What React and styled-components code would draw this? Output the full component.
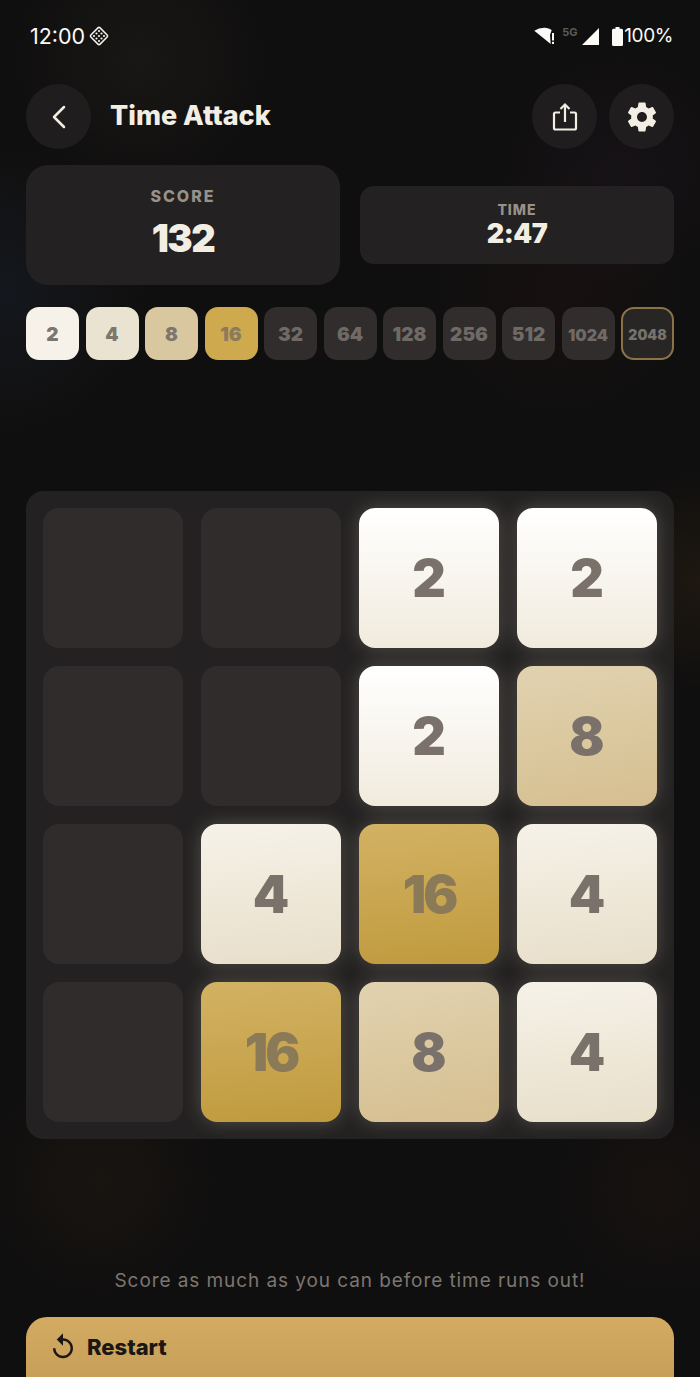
import React from 'react';
import styled, { createGlobalStyle, css } from 'styled-components';
import { ChevronLeft } from 'lucide-react';

const GlobalStyle = createGlobalStyle`
    html, body {
        margin: 0;
        padding: 0;
        background: #100f0f;
    }
    * {
        box-sizing: border-box;
    }
`;

const Page = styled.div`
    width: 700px;
    height: 1377px;
    overflow: hidden;
    padding: 0 26px;
    font-family: "Inter", "Noto Sans", sans-serif;
    color: #f3eee3;
    background:
        radial-gradient(circle at 0px 290px, rgba(32, 46, 66, 0.28), transparent 150px),
        radial-gradient(circle at 140px 60px, rgba(50, 48, 42, 0.25), transparent 130px),
        radial-gradient(circle at 620px 170px, rgba(40, 28, 44, 0.25), transparent 120px),
        radial-gradient(circle at 560px 290px, rgba(50, 20, 20, 0.2), transparent 130px),
        radial-gradient(circle at 700px 580px, rgba(70, 50, 20, 0.25), transparent 110px),
        radial-gradient(circle at 100px 1180px, rgba(50, 36, 20, 0.25), transparent 120px),
        radial-gradient(circle at 660px 1190px, rgba(50, 30, 20, 0.2), transparent 110px),
        #100f0f;
`;

const StatusBar = styled.div`
    height: 72px;
    padding: 24px 1px 0 4px;
    display: flex;
    align-items: flex-start;
    justify-content: space-between;
    line-height: 24px;
    color: #fbfaf7;
`;

const StatusGroup = styled.div`
    display: flex;
    align-items: center;
    gap: ${props => props.$gap || 0}px;
`;

const BatteryGroup = styled.div`
    display: flex;
    align-items: center;
    margin-left: 13px;
`;

const ClockText = styled.span`
    font-size: 21.5px;
    font-weight: 400;
`;

const BatteryText = styled.span`
    font-size: 19px;
    letter-spacing: -0.4px;
    margin-left: 1px;
`;

const FiveG = styled.span`
    width: 16px;
    font-size: 11px;
    font-weight: 700;
    line-height: 12px;
    color: #5d5b58;
    align-self: flex-start;
    margin: 2px 4px 0 7px;
`;

const Header = styled.header`
    height: 65px;
    margin-top: 12px;
    display: flex;
    align-items: center;
    justify-content: space-between;
`;

const HeaderGroup = styled.div`
    display: flex;
    align-items: center;
    gap: ${props => props.$gap}px;
`;

const RoundButton = styled.button`
    width: 65px;
    height: 65px;
    padding: 0;
    border: 0;
    border-radius: 50%;
    display: flex;
    align-items: center;
    justify-content: center;
    background: #1f1d1d;
    color: #f3eee3;
`;

const Title = styled.h1`
    margin: 0 0 2px;
    font-size: 27px;
    line-height: 32px;
    font-weight: 800;
    color: #f3eee3;
`;

const Stats = styled.div`
    margin-top: 16px;
    height: 120px;
    display: grid;
    grid-template-columns: 314px 314px;
    justify-content: space-between;
    align-items: center;
`;

const StatCard = styled.div`
    display: flex;
    flex-direction: column;
    align-items: center;
    background: #232121;
    ${props => props.$large ? css`
        height: 120px;
        border-radius: 22px;
        padding-top: 21px;
    ` : css`
        height: 78px;
        border-radius: 14px;
        padding-top: 15px;
    `}
`;

const StatLabel = styled.span`
    font-weight: 800;
    color: #98918a;
    ${props => props.$large ? css`
        font-size: 16px;
        line-height: 20px;
        letter-spacing: 2px;
    ` : css`
        font-size: 14px;
        line-height: 18px;
        letter-spacing: 1px;
    `}
`;

const StatValue = styled.span`
    font-weight: 900;
    color: #f3eee3;
    ${props => props.$large ? css`
        font-size: 38px;
        line-height: 44px;
        letter-spacing: -1.5px;
        margin-top: 10px;
    ` : css`
        font-size: 27px;
        line-height: 32px;
        letter-spacing: -0.5px;
        margin-top: -1px;
    `}
`;

const Chips = styled.div`
    margin-top: 22px;
    display: flex;
    justify-content: space-between;
`;

const chipLook = {
    2: css`background: #f6f2ea; color: #7d766e;`,
    4: css`background: #ebe3d2; color: #7d766e;`,
    8: css`background: #d9c7a0; color: #7d766e;`,
    16: css`background: #cfa94e; color: #8a7b5c;`,
};

const Chip = styled.div`
    width: 53px;
    height: 53px;
    padding-top: 2px;
    border-radius: 13px;
    display: flex;
    align-items: center;
    justify-content: center;
    font-weight: 900;
    font-size: ${props => props.$small ? 14 : props.$mid ? 16 : 19}px;
    background: #302d2c;
    color: #6f6a66;
    ${props => chipLook[props.$value]}
    ${props => props.$goal && css`
        background: #282625;
        color: #77726c;
        border: 2px solid #8a7447;
    `}
`;

const Board = styled.div`
    margin-top: 131px;
    width: 648px;
    height: 648px;
    padding: 17px;
    border-radius: 18px;
    background: #232121;
    display: grid;
    grid-template-columns: repeat(4, 140px);
    grid-template-rows: repeat(4, 140px);
    gap: 18px;
`;

const EmptyCell = styled.div`
    border-radius: 16px;
    background: #302c2b;
`;

const tileLook = {
    2: css`background: linear-gradient(180deg, #ffffff, #f1ebdd);`,
    4: css`background: linear-gradient(175deg, #f6f2e9, #e8dfca);`,
    8: css`background: linear-gradient(170deg, #e1d2b0, #d6bf90);`,
    16: css`background: linear-gradient(175deg, #d2b263, #c09a3e);`,
};

const Tile = styled.div`
    border-radius: 16px;
    display: flex;
    align-items: center;
    justify-content: center;
    font-size: 52px;
    font-weight: 900;
    letter-spacing: ${props => props.$value === 16 ? -3 : 0}px;
    color: ${props => props.$value === 16 ? '#8a7a58' : '#7a726a'};
    box-shadow: 0 0 20px rgba(255, 245, 225, 0.22);
    ${props => tileLook[props.$value]}
`;

const Hint = styled.p`
    margin: 130px 0 0;
    height: 24px;
    text-align: center;
    font-size: 19px;
    line-height: 24px;
    letter-spacing: 0.92px;
    color: #7c7670;
`;

const RestartButton = styled.button`
    margin-top: 24px;
    width: 648px;
    height: 70px;
    padding: 0 0 10px 22px;
    border: 0;
    border-radius: 21px 21px 0 0;
    display: flex;
    align-items: center;
    gap: 9px;
    font-family: inherit;
    font-size: 22px;
    font-weight: 800;
    color: #1a1714;
    background: linear-gradient(180deg, #d3ab63, #c69d56);
`;

const TIERS = [2, 4, 8, 16, 32, 64, 128, 256, 512, 1024, 2048];
const BOARD = [
    [0, 0, 2, 2],
    [0, 0, 2, 8],
    [0, 4, 16, 4],
    [0, 16, 8, 4],
];

const ChipIcon = () => (
    <svg width="22" height="22" viewBox="0 0 22 22" fill="none" stroke="#f5f3ee">
        <rect x="4.500" y="4.500" width="13" height="13" rx="1.500" transform="rotate(45 11 11)" strokeWidth="1.500" />
        <g fill="#f5f3ee" stroke="none">
            <circle cx="11" cy="6" r="1.100" /><circle cx="8.500" cy="8.500" r="1.100" /><circle cx="13.500" cy="8.500" r="1.100" />
            <circle cx="6" cy="11" r="1.100" /><circle cx="11" cy="11" r="1.100" /><circle cx="16" cy="11" r="1.100" />
            <circle cx="8.500" cy="13.500" r="1.100" /><circle cx="13.500" cy="13.500" r="1.100" /><circle cx="11" cy="16" r="1.100" />
        </g>
    </svg>
);

const WifiIcon = () => (
    <svg width="21" height="18" viewBox="0 0 21 18" fill="#fbfaf7">
        <path d="M0.300 3.700Q5 0.500 11 0.700 15 1 17.700 3L16 8 16.700 17z" />
        <rect x="18" y="6" width="2" height="7.500" />
        <rect x="18" y="14.800" width="2" height="2.200" />
    </svg>
);

const SignalIcon = () => (
    <svg width="17" height="18" viewBox="0 0 17 18" fill="#fbfaf7">
        <path d="M17 1V18H0z" />
    </svg>
);

const BatteryIcon = () => (
    <svg width="11" height="19" viewBox="0 0 11 19" fill="#fbfaf7">
        <path d="M3.500 0h4v1.800h2A1.500 1.500 0 0 1 11 3.300V17.500A1.500 1.500 0 0 1 9.500 19H1.500A1.500 1.500 0 0 1 0 17.500V3.300A1.500 1.500 0 0 1 1.500 1.800h2z" />
    </svg>
);

const ShareIcon = () => (
    <svg width="26" height="30" viewBox="0 0 26 30" fill="none" stroke="#f3eee3" strokeWidth="2.200">
        <path d="M8 10.500H3.500a1.500 1.500 0 0 0-1.500 1.500v14a1.500 1.500 0 0 0 1.500 1.500h19a1.500 1.500 0 0 0 1.500-1.500v-14a1.500 1.500 0 0 0-1.500-1.500H18" />
        <path d="M13 20V3" />
        <path d="M8.500 7 13 2.500 17.500 7" />
    </svg>
);

const GearIcon = () => (
    <svg width="36" height="36" viewBox="0 0 24 24" fill="#f3eee3">
        <path d="M19.140 12.940c.04-.3.06-.61.06-.94 0-.32-.02-.64-.07-.94l2.030-1.580c.18-.14.23-.41.12-.61l-1.920-3.320c-.12-.22-.37-.29-.59-.22l-2.390.96c-.5-.38-1.030-.7-1.620-.94l-.36-2.540c-.04-.24-.24-.41-.48-.41h-3.840c-.24 0-.43.17-.47.41l-.36 2.540c-.59.24-1.130.57-1.620.94l-2.390-.96c-.22-.08-.47 0-.59.22L2.740 8.870c-.12.21-.08.47.12.61l2.030 1.580c-.05.3-.09.63-.09.94s.02.64.07.94l-2.030 1.580c-.18.14-.23.41-.12.61l1.920 3.320c.12.22.37.29.59.22l2.390-.96c.5.38 1.030.7 1.620.94l.36 2.540c.05.24.24.41.48.41h3.840c.24 0 .44-.17.47-.41l.36-2.540c.59-.24 1.130-.56 1.620-.94l2.390.96c.22.08.47 0 .59-.22l1.920-3.320c.12-.22.07-.47-.12-.61l-2.010-1.580zM12 15.300c-1.820 0-3.300-1.480-3.300-3.300s1.480-3.300 3.300-3.300 3.300 1.480 3.300 3.300-1.480 3.300-3.300 3.300z" />
    </svg>
);

const ReplayIcon = () => (
    <svg width="30" height="30" viewBox="0 0 24 24" fill="#1a1714">
        <path d="M12 5V1L7 6l5 5V7c3.310 0 6 2.690 6 6s-2.690 6-6 6-6-2.690-6-6H4c0 4.420 3.580 8 8 8s8-3.580 8-8-3.580-8-8-8z" />
    </svg>
);

export default function App() {
    return (
        <Page>
            <GlobalStyle />
            <StatusBar>
                <StatusGroup $gap={3}>
                    <ClockText>12:00</ClockText>
                    <ChipIcon />
                </StatusGroup>
                <StatusGroup>
                    <WifiIcon />
                    <FiveG>5G</FiveG>
                    <SignalIcon />
                    <BatteryGroup>
                        <BatteryIcon />
                        <BatteryText>100%</BatteryText>
                    </BatteryGroup>
                </StatusGroup>
            </StatusBar>

            <Header>
                <HeaderGroup $gap={19}>
                    <RoundButton><ChevronLeft size={40} strokeWidth={1.5} /></RoundButton>
                    <Title>Time Attack</Title>
                </HeaderGroup>
                <HeaderGroup $gap={12}>
                    <RoundButton><ShareIcon /></RoundButton>
                    <RoundButton><GearIcon /></RoundButton>
                </HeaderGroup>
            </Header>

            <Stats>
                <StatCard $large>
                    <StatLabel $large>SCORE</StatLabel>
                    <StatValue $large>132</StatValue>
                </StatCard>
                <StatCard>
                    <StatLabel>TIME</StatLabel>
                    <StatValue>2:47</StatValue>
                </StatCard>
            </Stats>

            <Chips>
                {TIERS.map(value => (
                    <Chip
                        key={value}
                        $value={value}
                        $goal={value === 2048}
                        $small={value === 2048}
                        $mid={value === 1024}
                    >
                        {value}
                    </Chip>
                ))}
            </Chips>

            <Board>
                {BOARD.flat().map((value, index) => (
                    value === 0
                        ? <EmptyCell key={index} />
                        : <Tile key={index} $value={value}>{value}</Tile>
                ))}
            </Board>

            <Hint>Score as much as you can before time runs out!</Hint>

            <RestartButton>
                <ReplayIcon />
                Restart
            </RestartButton>
        </Page>
    );
}
